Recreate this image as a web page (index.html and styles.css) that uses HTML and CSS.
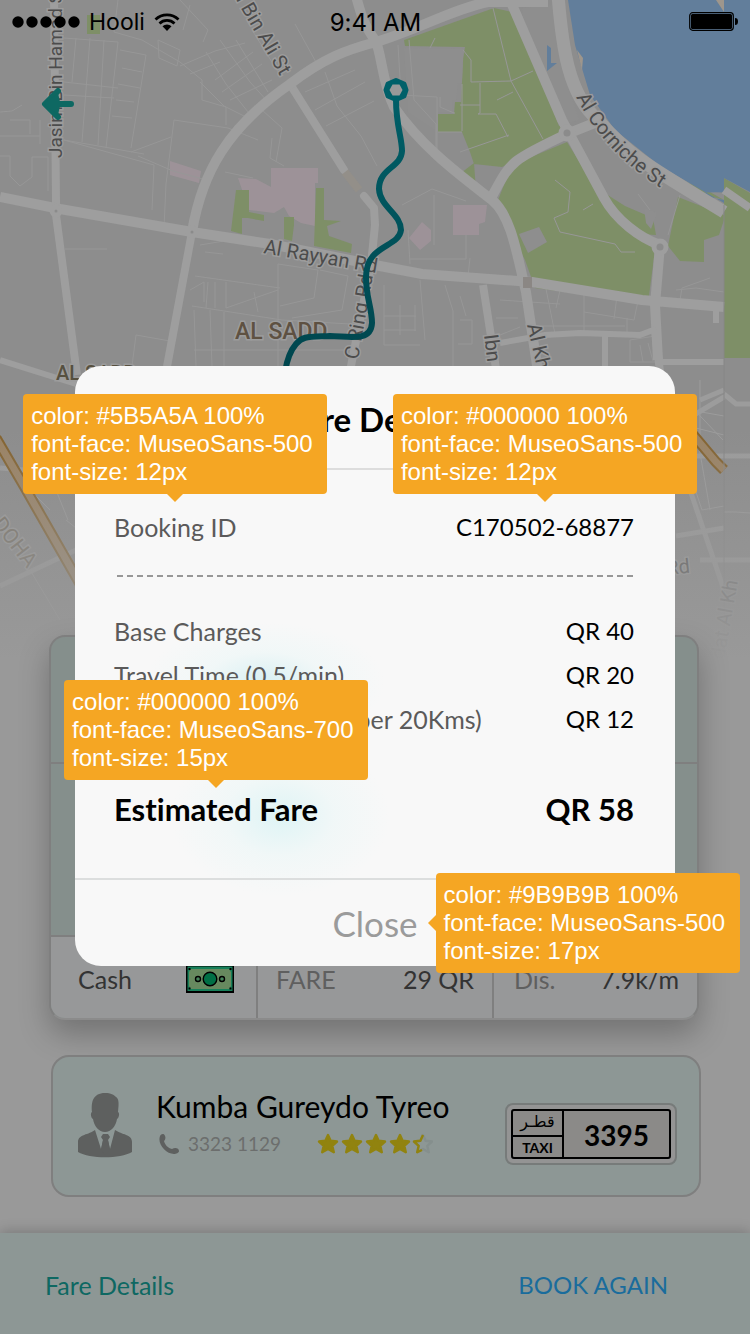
FILE: index.html
```html
<!DOCTYPE html>
<html lang="en">
<head>
<meta charset="utf-8">
<meta name="viewport" content="width=device-width, initial-scale=1">
<title>Fare Details</title>
<link rel="stylesheet" href="styles.css">
</head>
<body>
<div class="screen">
  <svg class="map" viewBox="0 0 750 660" aria-hidden="true">
    <defs>
      <linearGradient id="fade" x1="0" y1="0" x2="0" y2="1">
        <stop offset="0" stop-color="#999" stop-opacity="0"/>
        <stop offset="1" stop-color="#999"/>
      </linearGradient>
      <linearGradient id="route" gradientUnits="userSpaceOnUse" x1="0" y1="80" x2="0" y2="366">
        <stop offset="0" stop-color="#006069"/>
        <stop offset="1" stop-color="#00464e"/>
      </linearGradient>
      <path id="corniche" d="M576 97Q604 153 664 190"/>
    </defs>
    <rect width="750" height="660" fill="#8d8d8d"/>
    <g fill="#a0939a" opacity=".85">
      <path d="M238 178l18 1 15 8v-19h47v15h-3v43l-14-3-12-7-5-9-10 6-25-3zM170 161l31 10-2 12-29-8zM453 205h34l-2 17-6 2v11h-26zM422 222l9 8v11l-11 9-11-12z"/>
    </g>
    <g fill="#7e8f67">
      <path d="M404 40l90-32 18 4 54 122-50 26-14 7-28-3-4-12-8-20h-24v-18h16l1-12h6l2-44 2-11-60-1zM512 165l55-23 33 53 25 30 30 25-7 53-113-15-10-28-20-40-7-20zM457 176l17-13 2 27zM603 192l22 14 28 12 3 17-16-1-20-12zM678 197l46 18v5l-5 15-15 5v22l-24-1-12-15z"/>
      <path d="M724 178l26 15v165h-26zM236 190h13v22l15 3v6l-16-3-6 0v16l-11-3zM284 217h10v8l-2 16-8-2zM316 188h8v32l17 1-14 5 2 10 23 8-1 9-37-7zM87 15h13v19H87z"/>
      <path d="M640 155l35 22 35 15 14 8-40-11z"/>
    </g>
    <path fill="#8e8e8e" d="M404 48l60 1-1 12-1 22h-4l-2 17h-4v12h-14v20l-30-20zM519 234l20-7 8 15-19 11zM522 8l30-3 12 70 15 45-20 6-36-98zM644 208l13 5-6 16-5-6z"/>
    <path fill="#627e9b" d="M568 0h156v203l-64-37-45-36-25-35-15-50zM724 0h26v192l-26-14zM547 45v26l10-8-6 0v-15zM690 193l34 7v-8z"/>
    <path fill="#9e968c" d="M716 0h8v12zM577 50l6 8-1 12z"/>

    <!-- minor streets -->
    <g fill="none" stroke="#979797" stroke-width="1">
      <path d="M64 38l54 4M64 82l54 6M64 140l80 14M76 38l-4 44M90 38l-8 104M104 40l-6 105M118 42l-12 106M64 95l50 3M120 50l26 5-15 93M122 68l20 4M118 84l22 4M116 100l18 2M112 116l20 2M118 0l-4 32 28 8 38 22 22 18v20l24 7v18"/>
      <path d="M158 40l22 10-3 16-18-8zM180 66l35-15 30-8M190 74l30-12M200 82l24 24 20 10M215 80l38-28M222 92l40-28M230 100l42-20M206 52l20 32 22 28M220 40l30 42 18 20M236 40l32 52M252 30l28 45M180 0l28 30-5 12M190 5l-7 25"/>
      <path d="M174 120l54 8 30 12M174 120l-8 64-2 44M131 152l40-15M64 140l90 25-2 45M138 156l35 15 30 8M295 24l22 40M305 92l50-22M315 110l50-28M326 126l48-25M325 72l12 34 24 30 16 30M0 112l12-1 10-6M0 136h40M0 156h10v20l10 10 12-9v-20h16v34M10 120h20v14M40 120v24"/>
      <path d="M262 110l20 18-6 34M225 172l28 6M284 166l-14-8 2-20M65 249h42M136 335l34 6M136 335l-4 31M200 245l24-4M205 252l18 2M195 276l85 12M192 306l90 14 68 4M190 290l14-8v20M208 282l-2 26M215 282v26M226 282v26l52-18M278 264v102M278 264l40 6-4 28-34 8M320 270l28 6-6 34-50 8M194 310l2 56M210 310l2 56M224 312v54M194 350l150 0M254 292l4 20"/>
      <path d="M398 45l3 50 36 2v55M409 40l5 60 22 24v28M430 48l5-10M493 8l18 73 32 58M438 132l24 0M455 113h-1l-14-6 0-10M463 50l8 10v22l40-1 22-10M462 84v47M480 83v30l-2 1h18l12 23M460 105h20M460 152l49-17M497 100l16-8M555 180l15 12-2 20-14 6 6 14 55 12 6 8 14 0M583 210l10-6M402 205l30-16 34 12M408 230l2 34M434 195v50M466 235v24l-56 0M470 258l-2 18"/>
      <path d="M384 285v60h36M400 305v30M415 305v26M384 316h32M384 330h32M420 280l5 60M445 285l8 26v55M460 296l6 20M460 320h12v24h-14M500 300l60 4M496 318h22M500 335l20-8M545 284l10 50M560 290l-4 18M584 294v38M584 312l50 8 5-24M617 296l-3 23M627 318v16M540 326h85M650 210l-12-16M680 195l-12 40M676 290l20-2 28 4M680 300l2-12 28-10M630 340l25-4M630 340v22h26M640 345l3 17M648 343l5 18"/>
    </g>
    <!-- main roads -->
    <g fill="none" stroke="#9e9e9e" stroke-linejoin="round">
      <path stroke-width="8" d="M54-5l2 205v15l21 160M192 232l-26 140M483 285l14 90M655 330l6 50"/>
      <path stroke-width="8" stroke-linecap="round" d="M290 84l54 86M364 196l10 12 1 17-4 40-20 101"/>
      <path stroke-width="10" d="M0 197l60 12 132 23 78 12 110 22 42 8 110 8 110 18 82 7M192 232c10-60 36-105 98-148 34-26 56-34 86-42 40-12 80-34 112-40h60M356-4c8 30 10 30 20 46 6 14 6 40 18 65 30 43 70 71 98 93 20 16 26 60 34 92l12 80M510 0l52 120 42 78c12 22 36 40 56 47l-5 60 3 55M567 134c-60 28-56 28-77 66M567 134l30-12"/>
      <path stroke-width="13" d="M558-5c4 50 10 100 40 125 30 36 60 52 126 92"/>
      <path stroke-width="6" d="M500 343l45-8 35-2 60 2 16-6M605 336v30M716 308v15M658 362h66M0 360l76 24"/>
      <path stroke-width="8" d="M724 190l26 18"/>
    </g>
    <g fill="#8b8b8b" stroke="#9e9e9e" stroke-width="5">
      <circle cx="567" cy="133" r="6"/><circle cx="660" cy="247" r="6"/><circle cx="192" cy="232" r="4"/><circle cx="56" cy="211" r="4"/>
    </g>
    <path d="M523 277h9v11h-9z" fill="#8b8784"/>
    <path d="M345 172l14 18" stroke="#938f89" stroke-width="8"/>
    <!-- lower part of the city -->
    <g fill="none" stroke="#9c9c9c" stroke-width="5">
      <path d="M0 468l24 2M0 586l76-36M676 445l8-24 40-24M676 456h74M690 490l34 100M676 536l48-8M700 560h50M700 400l24-10M724 394l12 10h14"/>
      <path stroke-width="1" d="M30 570l30 50M48 470l20 50M30 490l20 20M66 520l10 8M700 380v60M685 400l38 40M690 410l34 6M684 425l40 10M682 450l20 60 22-4M696 430l14 80M724 512h12l14 1"/>
    </g>
    <path fill="none" stroke="#84632f" stroke-width="11" d="M-4 438l28 48 56 98M684 424l32 38 8 8"/>
    <path fill="none" stroke="#9b8364" stroke-width="7" d="M-4 438l28 48 56 98M684 424l32 38 8 8"/>
    <path d="M724 205v455" stroke="#868686" fill="none"/>
    <g class="map-label">
      <text class="map-street-small" transform="translate(62 158) rotate(-90)">Jasim Bin Hamad St</text>
      <text transform="translate(227 -16) rotate(60)">ad Bin Ali St</text>
      <text transform="translate(263 253) rotate(10)">Al Rayyan Rd</text>
      <text transform="translate(358 360) rotate(-80)">C Ring Rd</text>
      <text transform="translate(484 335) rotate(83)">Ibn M</text>
      <text transform="translate(527 325) rotate(77)">Al Kha</text>
      <text><textPath href="#corniche">Al Corniche St</textPath></text>
      <text transform="translate(667 575) rotate(-6)">Rd</text>
      <text transform="translate(724 660) rotate(-80)" opacity=".5">dat Al Kh</text>
      <text class="map-district" x="235" y="339">AL SADD</text>
      <text class="map-district map-district-small" x="56" y="380">AL SADD</text>
      <text class="map-town" transform="translate(-8 524) rotate(52)">DOHA</text>
    </g>
    <rect y="430" width="750" height="230" fill="url(#fade)"/>
    <path fill="none" stroke="url(#route)" stroke-width="6" d="M396 100C396 125 402 138 402 151C401 168 379 168 379 189C380 207 401 214 401 230C399 248 366 244 366 277C366 298 372 308 372 323C371 343 347 336 330 336C307 337 303 336 296 344C290 351 287 359 285 372"/>
    <path fill="#006069" stroke="#006069" stroke-width="5" stroke-linejoin="round" d="M396 80.500l8 3.500 2 6-2 6-8 3.500-8-3.500-2-6 2-6z"/>
    <path fill="#999" d="M392.500 84.500h7l3 5.500-3 5.500h-7l-3-5.500z"/>
  </svg>

  <header class="top">
    <div class="status">
      <div class="carrier">
        <svg width="68" height="12" viewBox="0 0 68 12" aria-hidden="true"><circle cx="6" cy="6" r="5.700"/><circle cx="20" cy="6" r="5.700"/><circle cx="34" cy="6" r="5.700"/><circle cx="48" cy="6" r="5.700"/><circle cx="62" cy="6" r="5.700"/></svg>
        <span>Hooli</span>
        <svg width="26" height="18" viewBox="0 0 26 18" aria-hidden="true"><g fill="none" stroke="#000" stroke-width="2.800"><path d="M1.500 6.500a16.500 16.500 0 0 1 23 0M5.500 10.500a10.700 10.700 0 0 1 15 0"/></g><path d="M8.500 13.300a6.500 6.500 0 0 1 9 0L13 18z"/></svg>
      </div>
      <time>9:41 AM</time>
      <svg class="battery" width="50" height="20" viewBox="0 0 50 20" aria-hidden="true"><rect x=".7" y=".7" width="43.600" height="17.600" rx="3" fill="none" stroke="#000" stroke-width="1.200"/><rect x="2" y="2" width="41" height="15" rx="1.500"/><path d="M46 6c2 0 3 1 3 3.500S48 13 46 13z"/></svg>
    </div>
    <button class="back" type="button" aria-label="Back">
      <svg width="34" height="34" viewBox="0 0 34 34" aria-hidden="true"><path d="M17 4L4 17l13 13M6 17h24" fill="none" stroke="#0e6862" stroke-width="6" stroke-linecap="round" stroke-linejoin="round"/><path d="M3 17L17 6l2 9v4l-2 9z" fill="#0e6862"/></svg>
    </button>
  </header>

  <main>
    <section class="trip" aria-label="Trip">
      <div class="trip-from"></div>
      <div class="trip-to"></div>
      <div class="trip-facts">
        <div class="fact"><span>Cash</span>
          <svg width="48" height="28" viewBox="0 0 48 28" aria-hidden="true"><rect width="48" height="28"/><rect x="1.500" y="1.500" width="45" height="24.500" fill="#17805a"/><path d="M5 4h38l2 3v14l-2 3H5l-2-3V7z" fill="#67895f"/><g stroke="#000" fill="#006f45"><circle cx="24" cy="14" r="6.800" stroke-width="1.400"/><circle cx="12" cy="14" r="2.500" fill="#44845a" stroke-width="1.400"/><circle cx="36" cy="14" r="2.500" fill="#44845a" stroke-width="1.400"/></g><path d="M2.500 3h2v2h-2zM43.500 3h2v2h-2zM2.500 22.500h2v2h-2zM43.500 22.500h2v2h-2z"/></svg>
        </div>
        <div class="fact"><span class="fact-name">FARE</span><span>29 QR</span></div>
        <div class="fact"><span class="fact-name">Dis.</span><span>7.9k/m</span></div>
      </div>
    </section>

    <section class="driver" aria-label="Driver">
      <svg width="54" height="66" viewBox="0 0 54 66" aria-hidden="true" fill="#5e605f"><path d="M27 0c6 0 9 2 11 4 3 2 3 6 2 15 2 1 1 6-1 7-1 7-6 13-12 13S16 33 15 26c-2-1-3-6-1-7C13 9 15 0 27 0z"/><path d="M17 37l6 19 2-9-2-3 2-3h5l2 3-2 3 2 9 5-19c7 5 17 4 17 12v10c-12 7-42 7-54 0V49c0-8 11-7 17-12z"/><path d="M25 47h5l2 10-5 5-4-5z"/></svg>
      <div class="driver-info">
        <h2>Kumba Gureydo Tyreo</h2>
        <div class="driver-meta">
          <a class="phone" href="tel:33231129"><svg width="20" height="20" viewBox="0 0 20 20" aria-hidden="true"><path fill="#5e605f" d="M1 2c1-2 4-3 5 0 1 2 0 4-1 5 1 4 4 7 8 8 3-2 7-1 7 2 0 2-3 3-5 3C7 20-2 10 1 2z"/></svg>3323 1129</a>
          <svg class="stars" width="116" height="22" viewBox="0 0 116 22" role="img" aria-label="4.5 of 5 stars">
            <defs><path id="star" d="M10 2l2.600 5.800 6.400.7-4.700 4.300 1.500 6.400L10 16l-5.800 3.200 1.500-6.400L1 8.500l6.400-.7z" stroke-linejoin="round" stroke-width="2.400"/></defs>
            <g fill="#91830f" stroke="#91830f"><use href="#star" x="1"/><use href="#star" x="25"/><use href="#star" x="49"/><use href="#star" x="73"/></g>
            <use href="#star" x="96" fill="none" stroke="#858f8d"/>
            <path d="M106 2l-2.600 5.800-6.400.7 4.700 4.300-1.500 6.400L105 17" fill="none" stroke="#91830f" stroke-width="2.400" stroke-linejoin="round"/>
          </svg>
        </div>
      </div>
      <div class="plate">
        <div class="plate-inner">
          <div class="plate-side"><span class="plate-country" lang="ar" dir="rtl">قطـر</span><span class="plate-kind">TAXI</span></div>
          <strong>3395</strong>
        </div>
      </div>
    </section>
  </main>

  <footer class="actions">
    <button class="action" type="button">Fare Details</button>
    <button class="action action-book" type="button">BOOK AGAIN</button>
  </footer>

  <div class="overlay">
    <div class="modal" role="dialog" aria-labelledby="modal-title">
      <h1 id="modal-title">Fare Details</h1>
      <div class="modal-body">
        <dl class="rows">
          <div class="row">
            <dt class="anchor">Booking ID<span class="tip" role="note">color: #5B5A5A 100%<br>font-face: MuseoSans-500<br>font-size: 12px</span></dt>
            <dd class="anchor">C170502-68877<span class="tip" role="note">color: #000000 100%<br>font-face: MuseoSans-500<br>font-size: 12px</span></dd>
          </div>
        </dl>
        <hr class="dashes">
        <dl class="rows">
          <div class="row"><dt>Base Charges</dt><dd>QR 40</dd></div>
          <div class="row"><dt>Travel Time (0.5/min)</dt><dd>QR 20</dd></div>
          <div class="row"><dt>Travel Distance (QR 1 per 20Kms)</dt><dd>QR 12</dd></div>
          <div class="row total">
            <dt class="anchor">Estimated Fare<span class="tip" role="note">color: #000000 100%<br>font-face: MuseoSans-700<br>font-size: 15px</span></dt>
            <dd>QR 58</dd>
          </div>
        </dl>
      </div>
      <div class="modal-foot">
        <div class="anchor">
          <button class="close" type="button" aria-describedby="close-note">Close</button>
          <span class="tip tip-right" id="close-note" role="note">color: #9B9B9B 100%<br>font-face: MuseoSans-500<br>font-size: 17px</span>
        </div>
      </div>
    </div>
  </div>
</div>
</body>
</html>
```

FILE: styles.css
```css
* {
  box-sizing: border-box;
}

body {
  margin: 0;
  background: #999;
  font-family: Lato, "Noto Sans", sans-serif;
  font-size: 25px;
  font-variant-ligatures: none;
  color: #000;
}

h1, h2, dl, dd {
  margin: 0;
}

button {
  padding: 0;
  border: 0;
  background: none;
  font: inherit;
  cursor: pointer;
}

.screen {
  position: relative;
  display: flex;
  flex-direction: column;
  min-height: 100vh;
  overflow: hidden;
}

/* Map */
.map {
  position: absolute;
  top: 0;
  left: 0;
  width: 100%;
}

.map-label {
  font-family: Roboto, sans-serif;
  font-size: 20px;
  fill: #4c4c4c;
  stroke: #9c9c9c;
  stroke-width: 3px;
  paint-order: stroke;
}

.map-street-small {
  font-size: 19px;
}

.map-district {
  font-size: 23px;
  font-weight: 500;
  fill: #5e5142;
}

.map-district-small {
  font-size: 20px;
  fill: #565040;
}

.map-town {
  font-size: 21px;
  fill: #777064;
}

/* Status bar */
.top {
  position: relative;
  min-height: 635px;
}

.status {
  display: grid;
  grid-template-columns: 1fr auto 1fr;
  align-items: center;
  height: 42px;
  padding: 2px 11px 0 12px;
  font-family: Inter, sans-serif;
  font-size: 23px;
}

.status time {
  font-size: 24px;
}

.carrier {
  display: flex;
  align-items: center;
  gap: 9px;
}

.battery {
  justify-self: end;
}

.back {
  display: block;
  width: 34px;
  height: 34px;
  margin: 45px 0 0 41px;
}

.back svg {
  display: block;
}

/* Trip card */
main {
  position: relative;
  flex: 1;
}

.trip {
  margin: 0 51px 35px 49px;
  border: 2px solid #7f7f7f;
  border-bottom-color: #8b8b8b;
  border-radius: 16px;
  overflow: hidden;
  background: #858f8c;
  box-shadow: 0 14px 30px rgba(0, 0, 0, 0.25);
}

.trip-from {
  height: 127px;
  border-bottom: 2px solid #7f7f7f;
}

.trip-to {
  height: 173px;
  border-bottom: 2px solid #7f7f7f;
}

.trip-facts {
  display: grid;
  grid-template-columns: 207fr 236fr 203fr;
  background: #979899;
  color: #333;
}

.fact {
  display: flex;
  align-items: center;
  justify-content: space-between;
  height: 81px;
  padding: 2px 18px 0;
  border-right: 2px solid #7f7f7f;
}

.fact:first-child {
  padding: 2px 22px 0 27px;
}

.fact:last-child {
  padding-left: 20px;
  border-right: 0;
}

.fact-name {
  color: #5f5f5f;
}

/* Driver card */
.driver {
  display: flex;
  align-items: center;
  gap: 24px;
  min-height: 142px;
  margin: 0 49px 36px 51px;
  padding: 0 22px 0 25px;
  border: 2px solid #7f7f7f;
  border-radius: 18px;
  background: #8d9795;
}

.driver-info {
  flex: 1;
  padding-bottom: 4px;
}

.driver h2 {
  font-size: 30px;
  font-weight: 400;
  line-height: 36px;
}

.driver-meta {
  display: flex;
  align-items: center;
  gap: 36px;
  margin-top: 4px;
}

.phone {
  display: flex;
  align-items: center;
  gap: 9px;
  padding-left: 3px;
  color: #6c6e6d;
  font-size: 19px;
  line-height: 32px;
  text-decoration: none;
}

.plate {
  width: 172px;
  height: 62px;
  margin-top: 16px;
  padding: 4px;
  border: 2px solid #777b7a;
  border-radius: 8px;
  background: #949494;
}

.plate-inner {
  display: flex;
  height: 50px;
  border: 2px solid #000;
  border-radius: 3px;
  background: #8b8a88;
}

.plate-side {
  display: grid;
  grid-template-rows: 26px 20px;
  width: 51px;
  border-right: 2px solid #000;
  text-align: center;
}

.plate-country {
  border-bottom: 2px solid #000;
  font-family: "DejaVu Sans", sans-serif;
  font-size: 16px;
  line-height: 22px;
}

.plate-kind {
  font-size: 14px;
  font-weight: 700;
  line-height: 22px;
}

.plate strong {
  flex: 1;
  font-size: 28px;
  line-height: 48px;
  text-align: center;
}

/* Bottom actions */
.actions {
  position: relative;
  display: flex;
  align-items: center;
  justify-content: space-between;
  height: 101px;
  padding: 2px 82px 0 45px;
  background: #8d9795;
  box-shadow: 0 -2px 12px rgba(0, 0, 0, 0.2);
}

.action {
  color: #0e6862;
}

.action-book {
  color: #1a6c9c;
  font-size: 24px;
}

/* Fare dialog */
.overlay {
  position: absolute;
  inset: 0;
  display: grid;
  justify-items: center;
  align-items: center;
  padding-bottom: 2px;
}

.modal {
  width: 80%;
  border-radius: 26px;
  background:
    radial-gradient(ellipse 110px 80px at 205px 450px, #def4f5, rgba(236, 247, 247, 0.6) 50%, rgba(248, 248, 248, 0)),
    radial-gradient(ellipse 120px 60px at 190px 316px, #d9f0f3, rgba(236, 247, 247, 0.6) 50%, rgba(248, 248, 248, 0)),
    #f8f8f8;
}

.modal h1 {
  height: 104px;
  padding-top: 4px;
  border-bottom: 2px solid #ddd;
  font-size: 33px;
  font-weight: 700;
  line-height: 98px;
  text-align: center;
}

.modal-body {
  padding: 35px 41px 51px 39px;
}

.row {
  display: flex;
  justify-content: space-between;
  line-height: 44px;
}

.row dt {
  color: #5b5a5a;
}

.row dd {
  font-size: 24px;
}

.row.total {
  margin-top: 50px;
  font-weight: 700;
  line-height: 36px;
}

.row.total dt,
.row.total dd {
  color: #000;
  font-size: 31px;
}

.dashes {
  height: 2px;
  margin: 26px 0 32px 3px;
  border: 0;
  background: repeating-linear-gradient(90deg, #979797 0 6px, transparent 6px 10px);
}

.modal-foot {
  display: flex;
  align-items: center;
  justify-content: center;
  height: 88px;
  border-top: 2px solid #dcdede;
}

.close {
  display: block;
  color: #9b9b9b;
  font-size: 35px;
  line-height: 48px;
}

/* Style notes */
.anchor {
  position: relative;
}

.tip {
  position: absolute;
  bottom: calc(100% + 11px);
  left: 50%;
  z-index: 1;
  min-width: 304px;
  padding: 8px;
  border-radius: 4px;
  background: #f5a623;
  color: #fff;
  font-family: "Liberation Sans", sans-serif;
  font-size: 24px;
  font-weight: 400;
  line-height: 28px;
  white-space: nowrap;
  transform: translateX(-50%);
}

.tip::after {
  content: "";
  position: absolute;
  top: 100%;
  left: calc(50% - 8px);
  border: 8px solid transparent;
  border-top-color: #f5a623;
  border-bottom: 0;
}

.tip-right {
  top: 50%;
  bottom: auto;
  left: calc(100% + 18px);
  transform: translateY(-50%);
}

.tip-right::after {
  top: calc(50% - 8px);
  left: -8px;
  border: 8px solid transparent;
  border-right-color: #f5a623;
  border-left: 0;
}
```
